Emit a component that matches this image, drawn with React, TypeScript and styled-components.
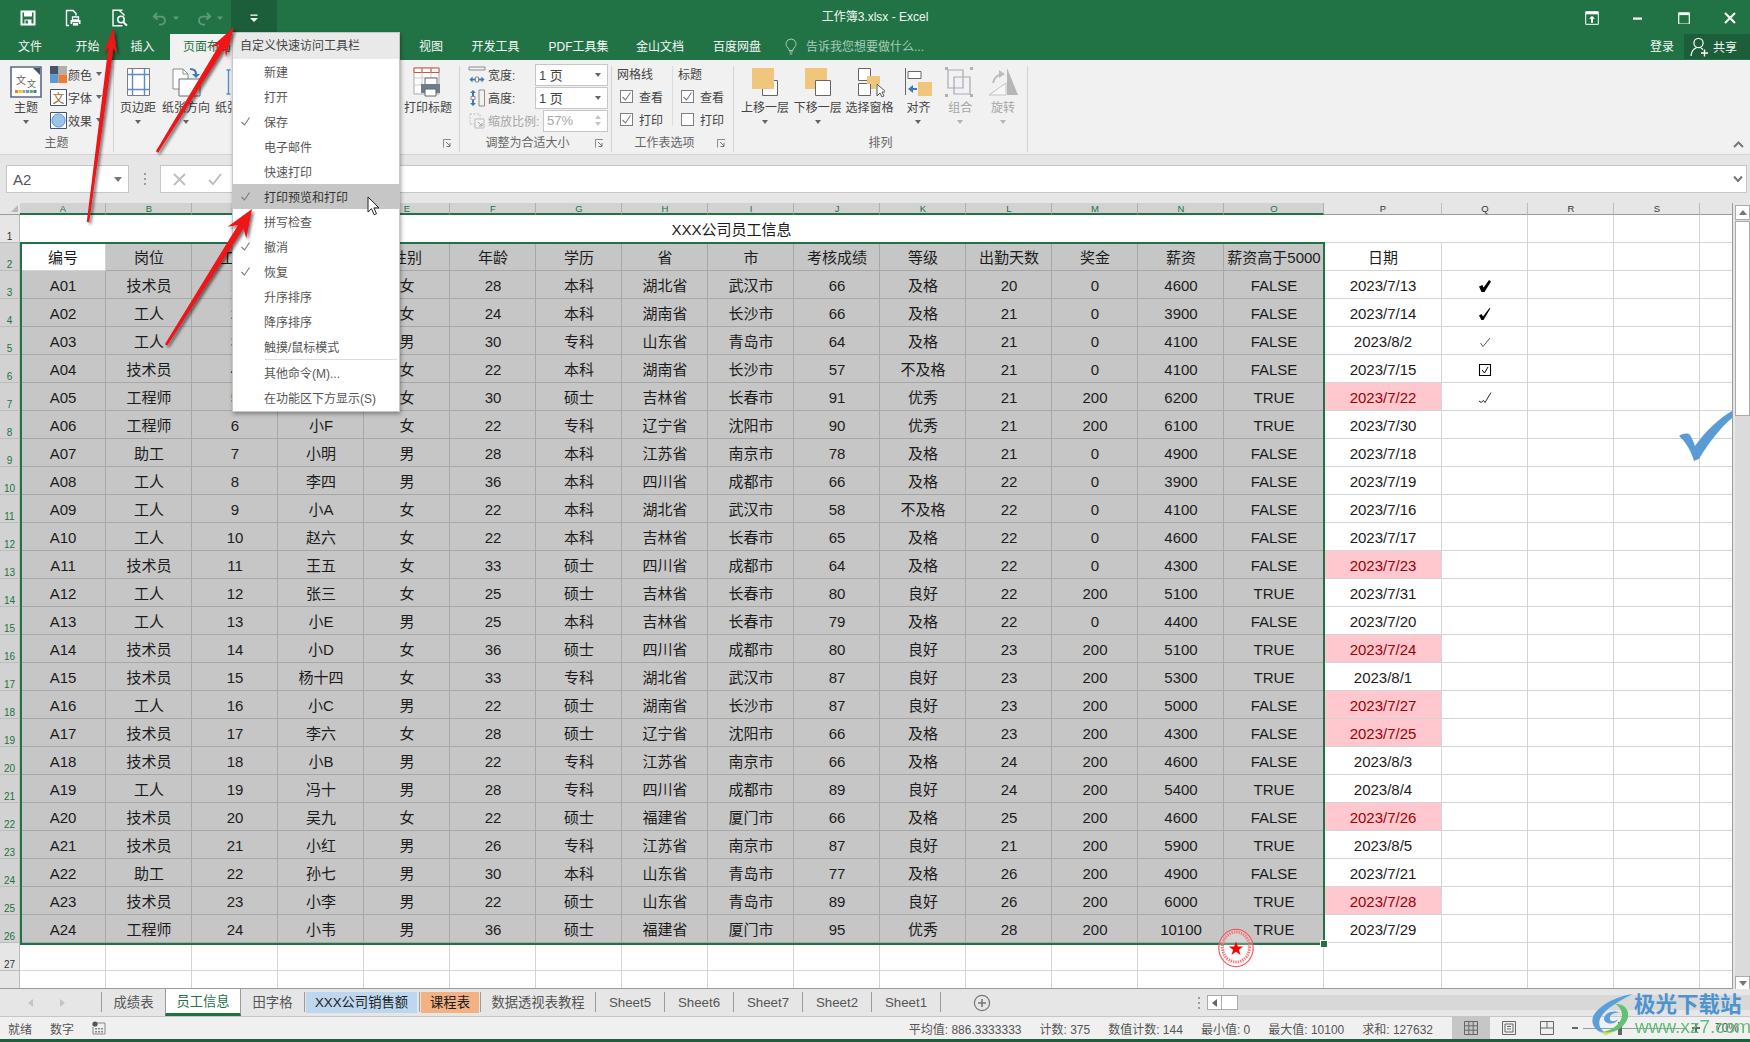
import React from "react";
import styled, { createGlobalStyle } from "styled-components";

const GREEN = "#217346";
const FONT = `"Liberation Sans","Noto Sans CJK SC",sans-serif`;

const Global = createGlobalStyle`
  html, body { margin: 0; padding: 0; overflow: hidden; background: #e6e6e6; }
  * { box-sizing: border-box; }
  body { font-family: ${FONT}; }
`;

const Page = styled.div`
  position: relative;
  width: 1750px;
  height: 1042px;
  display: flex;
  flex-direction: column;
  overflow: hidden;
  font-size: 12px;
  color: #444;
`;

/* ---------- title bar ---------- */
const TitleBar = styled.header`
  height: 34px;
  background: ${GREEN};
  display: grid;
  grid-template-columns: 1fr auto 1fr;
  align-items: stretch;
  color: #fff;
`;
const Qat = styled.div`
  display: flex;
  padding-left: 5px;
`;
const QatButton = styled.div<{ $w?: number; $on?: boolean }>`
  width: ${(p) => p.$w ?? 46}px;
  display: flex;
  align-items: center;
  justify-content: center;
  gap: 5px;
  background: ${(p) => (p.$on ? "#1c5d3a" : "transparent")};
`;
const WinTitle = styled.div`
  font-size: 12px;
  line-height: 35px;
  color: #f3f8f5;
`;
const WinControls = styled.div`
  display: flex;
  justify-content: flex-end;
  gap: 6px;
`;
const WinButton = styled.div`
  width: 40px;
  display: flex;
  align-items: center;
  justify-content: center;
`;

/* ---------- tabs ---------- */
const TabRow = styled.nav`
  height: 26px;
  background: ${GREEN};
  display: flex;
  color: #f4f8f6;
`;
const RibbonTab = styled.div<{ $w: number; $on?: boolean }>`
  width: ${(p) => p.$w}px;
  text-align: center;
  line-height: 26px;
  font-size: 12px;
  color: ${(p) => (p.$on ? GREEN : "#f4f8f6")};
  background: ${(p) => (p.$on ? "#f1f1f1" : "transparent")};
`;
const TellMe = styled.div`
  display: flex;
  align-items: center;
  gap: 9px;
  color: #a8cbb8;
  font-size: 12px;
  padding-left: 3px;
  line-height: 24px;
  height: 25px;
`;
const Login = styled.div`
  margin-left: auto;
  line-height: 26px;
  margin-right: 10px;
`;
const Share = styled.div`
  width: 66px;
  height: 25px;
  background: #1c5d3a;
  display: flex;
  align-items: center;
  gap: 3px;
  padding-left: 6px;
`;

/* ---------- ribbon ---------- */
const Ribbon = styled.section`
  height: 95px;
  background: #f1f1f1;
  border-bottom: 1px solid #d2d2d2;
  display: flex;
  position: relative;
`;
const Group = styled.div<{ $w: number }>`
  width: ${(p) => p.$w}px;
  height: 86px;
  margin-top: 6px;
  border-right: 1px solid #d4d4d4;
  display: flex;
  flex-direction: column;
`;
const GroupBody = styled.div<{ $pl?: number; $mt?: number }>`
  flex: 1;
  display: flex;
  padding-left: ${(p) => p.$pl ?? 0}px;
  margin-top: ${(p) => p.$mt ?? 0}px;
`;
const GroupFoot = styled.div`
  height: 17px;
  display: flex;
  align-items: center;
  color: #666;
  font-size: 12px;
  line-height: 17px;
`;
const GroupName = styled.div`
  flex: 1;
  text-align: center;
`;
const Launcher = styled.div`
  width: 16px;
  display: flex;
  align-items: center;
  justify-content: flex-start;
`;
const LargeButton = styled.div<{ $w: number; $ml?: number; $off?: boolean }>`
  width: ${(p) => p.$w}px;
  margin-left: ${(p) => p.$ml ?? 0}px;
  display: flex;
  flex-direction: column;
  align-items: center;
  color: ${(p) => (p.$off ? "#a6a6a6" : "#444")};
  padding-top: 1px;
`;
const LargeIcon = styled.div`
  height: 30px;
  display: flex;
  align-items: center;
  justify-content: center;
`;
const LargeLabel = styled.div`
  line-height: 16px;
  margin-top: 3px;
  white-space: nowrap;
`;
const Caret = styled.div<{ $off?: boolean }>`
  width: 0;
  height: 0;
  margin-top: 4px;
  border-left: 3.5px solid transparent;
  border-right: 3.5px solid transparent;
  border-top: 4px solid ${(p) => (p.$off ? "#b5b5b5" : "#666")};
`;
const ThemeColumn = styled.div`
  display: flex;
  flex-direction: column;
  gap: 5px;
  margin: -1px 0 0 6px;
`;
const ThemeRow = styled.div`
  height: 18px;
  display: flex;
  align-items: center;
  gap: 1px;
`;
const SmallCaret = styled(Caret)`
  margin: 0 0 0 3px;
`;
const SelectCaret = styled(Caret)`
  margin: 0;
`;
const FitColumn = styled.div`
  flex: 1;
  display: flex;
  flex-direction: column;
  padding: 0 3px 0 8px;
`;
const FitRow = styled.div<{ $off?: boolean }>`
  height: 23px;
  display: flex;
  align-items: center;
  gap: 2px;
  color: ${(p) => (p.$off ? "#a6a6a6" : "#444")};
`;
const Select = styled.div<{ $w: number }>`
  margin-left: auto;
  width: ${(p) => p.$w}px;
  height: 22px;
  background: #fff;
  border: 1px solid #c6c6c6;
  display: flex;
  align-items: center;
  justify-content: space-between;
  padding: 0 6px 0 3px;
  font-size: 13px;
`;
const SpinMarks = styled.div`
  display: flex;
  flex-direction: column;
  gap: 3px;
`;
const UpMark = styled.div`
  width: 0;
  height: 0;
  border-left: 3px solid transparent;
  border-right: 3px solid transparent;
  border-bottom: 4px solid #c4c4c4;
`;
const DownMark = styled(UpMark)`
  border-bottom: 0;
  border-top: 4px solid #c4c4c4;
`;
const OptionColumn = styled.div<{ $w: number; $line?: boolean }>`
  width: ${(p) => p.$w}px;
  height: 60px;
  padding-left: 5px;
  border-right: ${(p) => (p.$line ? "1px solid #dcdcdc" : "0")};
`;
const OptionTitle = styled.div`
  line-height: 16px;
  margin: 1px 0 2px;
`;
const OptionRow = styled.div`
  height: 23px;
  display: flex;
  align-items: center;
  gap: 6px;
  padding-left: 3px;
`;
const CheckBox = styled.div`
  width: 13px;
  height: 13px;
  background: #fff;
  border: 1px solid #7f7f7f;
  display: flex;
  align-items: center;
  justify-content: center;
`;
const Collapse = styled.div`
  position: absolute;
  right: 6px;
  bottom: 6px;
`;

/* ---------- formula bar ---------- */
const FormulaBar = styled.section`
  height: 48px;
  background: #e6e6e6;
  display: flex;
  padding: 10px 3px 10px 6px;
`;
const NameBox = styled.div`
  width: 123px;
  background: #fff;
  border: 1px solid #c6c6c6;
  display: flex;
  align-items: center;
  justify-content: space-between;
  padding: 0 6px;
  font-size: 15px;
  color: #555;
`;
const NameCaret = styled.div`
  width: 0;
  height: 0;
  border-left: 4px solid transparent;
  border-right: 4px solid transparent;
  border-top: 5px solid #777;
`;
const Grip = styled.div`
  width: 31px;
  display: flex;
  flex-direction: column;
  align-items: center;
  justify-content: center;
  gap: 3px;
`;
const GripDot = styled.div`
  width: 2px;
  height: 2px;
  background: #9d9d9d;
`;
const FormulaInput = styled.div`
  flex: 1;
  background: #fff;
  border: 1px solid #c6c6c6;
  display: flex;
  align-items: center;
  gap: 22px;
  padding-left: 12px;
`;
const FormulaChevron = styled.div`
  margin-left: auto;
  margin-right: 3px;
`;

/* ---------- sheet ---------- */
const SheetArea = styled.section`
  height: 786px;
  display: flex;
  background: #e6e6e6;
`;
const COLS = [...Array(14).fill(86), 100, 118, 86, 86, 86, 33];
const SheetGrid = styled.div`
  width: 1733px;
  height: 786px;
  display: grid;
  grid-template-columns: 20px ${COLS.map((c) => c + "px").join(" ")};
  grid-template-rows: 12px repeat(27, 28px) 18px;
  overflow: hidden;
  background: #fff;
  border-right: 1px solid #9b9b9b;
  border-bottom: 1px solid #9b9b9b;
  position: relative;
`;
const Corner = styled.div`
  background: #e6e6e6;
  border-bottom: 1px solid #9b9b9b;
  position: relative;
  &::after {
    content: "";
    position: absolute;
    right: 2px;
    bottom: 2px;
    border-left: 7px solid transparent;
    border-bottom: 7px solid #b8b8b8;
  }
`;
const ColHead = styled.div<{ $sel?: boolean }>`
  background: ${(p) => (p.$sel ? "#d2d2d2" : "#e6e6e6")};
  color: ${(p) => (p.$sel ? "#217346" : "#333")};
  border-right: 1px solid ${(p) => (p.$sel ? "#b0b0b0" : "#bcbcbc")};
  border-bottom: ${(p) => (p.$sel ? "2px solid #217346" : "1px solid #9b9b9b")};
  font-size: 9.5px;
  line-height: 12px;
  text-align: center;
  padding-left: 1px;
`;
const RowHead = styled.div<{ $sel?: boolean }>`
  background: ${(p) => (p.$sel ? "#d2d2d2" : "#e6e6e6")};
  color: ${(p) => (p.$sel ? "#217346" : "#333")};
  border-right: 1px solid #bcbcbc;
  border-bottom: 1px solid #bcbcbc;
  font-size: 10px;
  line-height: 11px;
  display: flex;
  align-items: flex-end;
  justify-content: center;
`;
const Cell = styled.div<{ $kind?: "sel" | "active" | "plain" | "bad" }>`
  background: ${(p) =>
    p.$kind === "sel" ? "#c6c6c6" : p.$kind === "bad" ? "#ffc7ce" : "#fff"};
  color: ${(p) => (p.$kind === "bad" ? "#9c0006" : "#1c1c1c")};
  border-right: 1px solid ${(p) => (p.$kind === "sel" ? "#a7a7a7" : "#d4d4d4")};
  border-bottom: 1px solid ${(p) => (p.$kind === "sel" ? "#a7a7a7" : "#d4d4d4")};
  font-size: 15px;
  line-height: 27px;
  padding: 2px 0 0 1px;
  text-align: center;
  white-space: nowrap;
  display: flex;
  align-items: center;
  justify-content: center;
  overflow: hidden;
`;
const TitleCell = styled.div`
  grid-column: 2 / 18;
  background: #fff;
  border-bottom: 1px solid #d4d4d4;
  font-size: 15px;
  line-height: 29px;
  text-align: center;
  padding-left: 1px;
  color: #1c1c1c;
`;
const Selection = styled.div`
  position: absolute;
  grid-column: 2 / 17;
  grid-row: 3 / 28;
  inset: -1px -1px -2px 0;
  z-index: 2;
  border: 2px solid #217346;
  pointer-events: none;
`;
const FillHandle = styled.div`
  position: absolute;
  right: -5px;
  bottom: -5px;
  width: 6px;
  height: 6px;
  background: #217346;
  border: 1px solid #fff;
  box-sizing: content-box;
`;
const VScroll = styled.div`
  width: 15px;
  margin-left: 2px;
  height: 786px;
  background: #dbdbdb;
  margin-top: 2px;
  display: flex;
  flex-direction: column;
`;
const ScrollBtn = styled.div<{ $mt?: string }>`
  height: 15px;
  background: #fff;
  border: 1px solid #ababab;
  display: flex;
  align-items: center;
  justify-content: center;
  margin-top: ${(p) => p.$mt ?? "0"};
`;
const VThumb = styled.div`
  height: 195px;
  margin-top: 1px;
  background: #fff;
  border: 1px solid #ababab;
`;

/* ---------- sheet tabs ---------- */
const SheetTabs = styled.section`
  height: 28px;
  background: #e6e6e6;
  display: flex;
  align-items: stretch;
  border-bottom: 1px solid #c6c6c6;
`;
const TabNav = styled.div`
  width: 101px;
  display: flex;
  gap: 24px;
  align-items: center;
  padding-left: 27px;
`;
const TabSep = styled.div`
  width: 1px;
  margin: 3px 0 4px;
  background: #9b9b9b;
  flex: none;
`;
const SheetTab = styled.div<{ $w: number }>`
  width: ${(p) => p.$w}px;
  text-align: center;
  font-size: 13.3px;
  line-height: 27px;
  color: #555;
  white-space: nowrap;
`;
const ActiveTab = styled(SheetTab)`
  background: #fff;
  color: #217346;
  border: 1px solid #9b9b9b;
  border-top: 0;
  border-bottom: 3px solid #217346;
  margin-top: -1px;
  line-height: 28px;
`;
const ColorTab = styled(SheetTab)<{ $bg: string; $ml: number; $mr: number }>`
  background: ${(p) => p.$bg};
  color: #1c1c1c;
  margin: 3px ${(p) => p.$mr}px 3px ${(p) => p.$ml}px;
  line-height: 21px;
`;
const AddSheet = styled.div`
  margin-left: 29px;
  width: 24px;
  display: flex;
  align-items: center;
  justify-content: center;
`;
const HScrollWrap = styled.div`
  margin-left: auto;
  display: flex;
  align-items: center;
  width: 560px;
`;
const HDots = styled.div`
  width: 17px;
  display: flex;
  flex-direction: column;
  align-items: center;
  gap: 3px;
`;
const HTrack = styled.div`
  flex: 1;
  height: 15px;
  background: #d8d8d8;
  display: flex;
  align-items: stretch;
`;
const HBtn = styled.div`
  width: 15px;
  background: #fff;
  border: 1px solid #ababab;
  display: flex;
  align-items: center;
  justify-content: center;
`;
const HThumb = styled.div`
  width: 16px;
  background: #fff;
  border: 1px solid #ababab;
  border-left: 0;
`;

/* ---------- status ---------- */
const StatusBar = styled.footer`
  height: 22px;
  background: #f0f0f0;
  display: flex;
  align-items: stretch;
  font-size: 12px;
  color: #555;
`;
const StatusLeft = styled.div`
  display: flex;
  align-items: center;
  gap: 18px;
  padding-left: 8px;
`;
const StatusRight = styled.div`
  margin-left: auto;
  display: flex;
  align-items: center;
  gap: 18px;
  margin-right: 19px;
`;
const ViewBtn = styled.div<{ $on?: boolean }>`
  width: 38px;
  background: ${(p) => (p.$on ? "#c6c6c6" : "transparent")};
  display: flex;
  align-items: center;
  justify-content: center;
`;
const Zoomer = styled.div`
  width: 184px;
  display: flex;
  align-items: center;
  padding-left: 5px;
`;
const ZoomValue = styled.span`
  margin-left: 15px;
`;
const Slider = styled.div`
  position: relative;
  width: 104px;
  height: 1px;
  background: #9a9a9a;
  margin: 0 5px 0 4px;
`;
const SliderKnob = styled.div`
  position: absolute;
  left: 35px;
  top: -6px;
  width: 4px;
  height: 13px;
  background: #666;
`;
const Bottom = styled.div`
  height: 3px;
  background: #1b5f3f;
`;

/* ---------- menu ---------- */
const Menu = styled.div`
  position: absolute;
  left: 232px;
  top: 32px;
  width: 168px;
  height: 380px;
  background: #fff;
  border: 1px solid #c6c6c6;
  box-shadow: 1px 2px 4px rgba(0, 0, 0, 0.35);
  z-index: 5;
  font-size: 12px;
  color: #555;
`;
const MenuHead = styled.div`
  height: 26px;
  line-height: 27px;
  background: #e9e9e9;
  color: #444;
  padding-left: 7px;
`;
const MenuItem = styled.div<{ $on?: boolean }>`
  height: 25px;
  display: flex;
  align-items: center;
  background: ${(p) => (p.$on ? "#c6c6c6" : "transparent")};
  color: ${(p) => (p.$on ? "#333" : "#555")};
`;
const MenuTick = styled.div`
  width: 31px;
  padding-left: 7px;
  display: flex;
  align-items: center;
`;
const MenuRule = styled.div`
  height: 1px;
  background: #dcdcdc;
  margin: 0 2px 0 32px;
`;

/* ---------- overlays ---------- */
const Overlay = styled.svg`
  position: absolute;
  left: 0;
  top: 0;
  z-index: 6;
  pointer-events: none;
`;
const Mark = styled.svg<{ $x: number; $y: number; $z?: number }>`
  position: absolute;
  left: ${(p) => p.$x}px;
  top: ${(p) => p.$y}px;
  z-index: ${(p) => p.$z ?? 4};
  pointer-events: none;
`;
const WaterBrand = styled.div`
  position: absolute;
  left: 1634px;
  top: 990px;
  z-index: 7;
  font-size: 21.5px;
  font-weight: 700;
  line-height: 30px;
  color: #4c94d0;
  white-space: nowrap;
`;
const WaterUrl = styled.div`
  position: absolute;
  left: 1635px;
  top: 1016px;
  z-index: 7;
  font-size: 19px;
  line-height: 22px;
  color: #58b873;
  opacity: 0.92;
  white-space: nowrap;
`;
const IconSvg = styled.svg<{ $flip?: boolean }>`
  display: block;
  flex: none;
  transform: ${(p) => (p.$flip ? "scaleX(-1)" : "none")};
`;

/* ---------- icons ---------- */
const Svg: React.FC<{ s?: number; h?: number; flip?: boolean; children?: React.ReactNode }> = ({ s = 30, h, flip, children }) => (
  <IconSvg $flip={flip} width={s} height={h ?? s} viewBox={`0 0 ${s} ${h ?? s}`}>
    {children}
  </IconSvg>
);

const IconSave = () => (
  <Svg s={16}>
    <path d="M1.5 1.5h13v13h-13z" fill="none" stroke="#fff" strokeWidth="2" />
    <path d="M4 2h8v4.5H4zM4.5 9.5h7V14h-7z" fill="#fff" />
    <path d="M5.5 10.5h2.4v3H5.5z" fill={GREEN} />
  </Svg>
);
const IconPrintDoc = () => (
  <Svg s={18}>
    <path d="M4 16.5H1.5v-15h6.5l3 3v2" fill="none" stroke="#fff" strokeWidth="1.4" />
    <path d="M7.5 8h6v3h-6z" fill="none" stroke="#fff" strokeWidth="1.3" />
    <path d="M5.5 11h10v4h-10z" fill="#fff" />
    <path d="M7.5 13.5h6v3.5h-6z" fill="#fff" stroke={GREEN} strokeWidth=".8" />
  </Svg>
);
const IconPreview = () => (
  <Svg s={18}>
    <path d="M11.5 1.2H2v15.5h9.5" fill="none" stroke="#fff" strokeWidth="1.4" />
    <path d="M8 1.2l5 4.6v1" fill="none" stroke="#fff" strokeWidth="1.4" />
    <circle cx="10" cy="10.5" r="3.2" fill="none" stroke="#fff" strokeWidth="1.5" />
    <path d="M12.3 13l3.6 3.6" stroke="#fff" strokeWidth="2" />
  </Svg>
);
const IconUndo = ({ flip }: { flip?: boolean }) => (
  <Svg s={16} flip={flip}>
    <path d="M5 3L1.8 6.6 5.6 9.6M2.5 6.6h6.5a4 4 0 1 1 0 8H7" fill="none" stroke="#5d9a7b" strokeWidth="1.9" />
  </Svg>
);
const TinyDown = () => (
  <Svg s={6}>
    <path d="M0 1.5h6L3 5z" fill="#5d9a7b" />
  </Svg>
);
const IconCustom = () => (
  <Svg s={10}>
    <path d="M1.5 1.5h7v1.3h-7z" fill="#fff" />
    <path d="M1 5h8L5 9z" fill="#fff" />
  </Svg>
);
const IconDisplay = () => (
  <Svg s={14}>
    <path d="M.7.7h12.6v12.6H.7z" fill="none" stroke="#fff" />
    <path d="M1 1h12v2.3H1z" fill="#fff" />
    <path d="M7 4.8l3 3H8v4H6v-4H4z" fill="#fff" />
  </Svg>
);
const IconMin = () => (
  <Svg s={12}>
    <path d="M1 5.5h9v2.2H1z" fill="#fff" />
  </Svg>
);
const IconMax = () => (
  <Svg s={12}>
    <path d="M.7 1h10.6v11H.7z" fill="none" stroke="#fff" strokeWidth="1.2" />
    <path d="M.7 .5h10.6v2.6H.7z" fill="#fff" />
  </Svg>
);
const IconClose = () => (
  <Svg s={12}>
    <path d="M1 1l10 10M11 1L1 11" stroke="#fff" strokeWidth="2.1" />
  </Svg>
);
const IconBulb = () => (
  <Svg s={12} h={17}>
    <path d="M6 1a5 5 0 0 0-3 9c.8.7 1 1.5 1 2.5h4c0-1 .2-1.8 1-2.5a5 5 0 0 0-3-9z" fill="none" stroke="#a8cbb8" />
    <path d="M4.2 14h3.6M4.8 16h2.4" stroke="#a8cbb8" />
  </Svg>
);
const IconPerson = () => (
  <Svg s={20} h={22}>
    <circle cx="8.5" cy="7" r="4.6" fill="none" stroke="#fff" strokeWidth="1.2" />
    <path d="M1 20c.4-4.3 2.4-7 5.3-8.2M11 12l2 1.5" fill="none" stroke="#fff" strokeWidth="1.2" />
    <path d="M14.5 13.5v7M11 17h7" stroke="#fff" strokeWidth="1.4" />
  </Svg>
);

const IconTheme = () => (
  <Svg s={32}>
    <path d="M1 1h30v30H1z" fill="#fff" stroke="#596a7f" strokeWidth="1.6" />
    <path d="M23 2h7v7z" fill="#44546a" />
    <text x="6" y="18" fontSize="10" fill="#666" fontFamily={FONT}>文</text>
    <text x="17" y="21" fontSize="9" fill="#666" fontFamily={FONT}>文</text>
    {["#ed7d31", "#ffc000", "#a5a5a5", "#5b9bd5", "#70ad47", "#4472c4"].map((c, i) => (
      <rect key={c} x={5 + i * 3.7} y="24" width="3" height="3" fill={c} />
    ))}
  </Svg>
);
const IconColors = () => (
  <Svg s={17}>
    <path d="M0 0h8.5v8.5H0z" fill="#44546a" />
    <path d="M8.5 0H17v8.5H8.5z" fill="#b0b0b0" />
    <path d="M0 8.5h8.5V17H0z" fill="#5b9bd5" />
    <path d="M8.5 8.5H17V17H8.5z" fill="#ed7d31" />
  </Svg>
);
const IconFonts = () => (
  <Svg s={17}>
    <path d="M.5.5h16v16H.5z" fill="#fff" stroke="#44546a" />
    <text x="2.5" y="13.5" fontSize="12" fill="#9a6a2f" fontFamily={FONT}>文</text>
  </Svg>
);
const IconEffects = () => (
  <Svg s={17}>
    <path d="M.5.5h16v16H.5z" fill="#fff" stroke="#44546a" />
    <circle cx="8.5" cy="8.5" r="6.6" fill="#9dc3e6" stroke="#5b9bd5" />
  </Svg>
);
const IconMargins = () => (
  <Svg>
    <path d="M4.5 1.5h22v27h-22z" fill="#fff" stroke="#7d7d7d" />
    <path d="M9.5 2v26M21.5 2v26M5 7.5h21M5 22.5h21" stroke="#5b8cc7" strokeWidth="1.4" fill="none" />
  </Svg>
);
const IconOrient = () => (
  <Svg>
    <path d="M2 2h10l5 5v15H2z" fill="#fff" stroke="#8d8d8d" />
    <path d="M12 2v5h5" fill="none" stroke="#8d8d8d" />
    <path d="M8 12h21v17H8z" fill="#fff" stroke="#6d6d6d" />
    <path d="M19 2c4 0 6 2 6 5" fill="none" stroke="#3f7ab8" strokeWidth="2.2" />
    <path d="M21 7l4 4 4-4z" fill="#3f7ab8" />
  </Svg>
);
const IconSize = () => (
  <Svg>
    <path d="M4.5 3v24M2.5 3h4M2.5 27h4" stroke="#5b8cc7" strokeWidth="1.4" fill="none" />
    <path d="M10 2h16v26H10z" fill="#fff" stroke="#8d8d8d" />
  </Svg>
);
const IconArea = () => (
  <Svg>
    <path d="M5 2h20v26H5z" fill="#fff" stroke="#8d8d8d" />
  </Svg>
);
const IconPrintTitle = () => (
  <Svg s={32}>
    <path d="M2 2h25v26H2z" fill="#fff" stroke="#a8a8a8" />
    <path d="M2 2h25v4.5H2z" fill="#fff" stroke="#c8553d" />
    <path d="M10 2v26M19 2v26M2 12h25M2 19h25" stroke="#c9c9c9" fill="none" />
    <path d="M10 2v5M19 2v5" stroke="#c8553d" />
    <path d="M13 12h12v7H13z" fill="#fff" stroke="#666" />
    <path d="M9 18h19v9H9z" fill="#6b7d8e" />
    <path d="M13 23h11v7H13z" fill="#fff" stroke="#666" />
  </Svg>
);
const IconWide = () => (
  <Svg s={18}>
    <path d="M1 1h16M1 4h16M1 1v3M17 1v3" stroke="#8d8d8d" fill="none" />
    <path d="M1.5 13.5l3-3v2h3v2h-3v2zM16.5 13.5l-3-3v2h-3v2h3v2z" fill="#3f7ab8" />
    <path d="M7.5 11h3v5h-3z" fill="none" stroke="#8d8d8d" />
  </Svg>
);
const IconTall = () => (
  <Svg s={18}>
    <path d="M11 1h5.5v16H11z" fill="none" stroke="#8d8d8d" />
    <path d="M5 1l3 3H6v3H4V4H2zM5 17l-3-3h2v-3h2v3h2z" fill="#3f7ab8" />
    <path d="M3 7.5h4v3H3z" fill="none" stroke="#8d8d8d" />
  </Svg>
);
const IconScale = () => (
  <Svg s={18}>
    <path d="M2 2h10v10H2z" fill="none" stroke="#bdbdbd" strokeDasharray="2 1.5" />
    <path d="M7 7h9v9H7z" fill="#f4f4f4" stroke="#bdbdbd" />
    <path d="M10 10l4 4M14 11v3h-3" fill="none" stroke="#9d9d9d" />
  </Svg>
);
const Launch = () => (
  <Svg s={9}>
    <path d="M.5 4V.5H8M.5.5V8.5M8.5 .5" fill="none" stroke="#8d8d8d" />
    <path d="M3 3l4 4M7 4v3.5H3.5" fill="none" stroke="#777" />
  </Svg>
);
const Tick = () => (
  <Svg s={11}>
    <path d="M1.5 6l3 3 5-7.5" fill="none" stroke="#7a7a7a" strokeWidth="1.1" />
  </Svg>
);
const YELLOW = "#efc67b";
const IconUp = () => (
  <Svg>
    <path d="M12.5 13.5h15v15h-15z" fill="#fff" stroke="#666" />
    <path d="M2 1h22v21H2z" fill={YELLOW} />
  </Svg>
);
const IconDown = () => (
  <Svg>
    <path d="M2 1h22v21H2z" fill={YELLOW} />
    <path d="M12.5 13.5h15v15h-15z" fill="#fff" stroke="#666" />
  </Svg>
);
const IconPane = () => (
  <Svg>
    <path d="M3.5 1.5h12v12h-12zM3.5 16.5h12v12h-12z" fill="#fff" stroke="#666" />
    <path d="M12 9h13v8h-4v5h-5v-5h-4z" fill={YELLOW} />
    <path d="M22 17v12l3-3 2 4 2-1-2-4h4z" fill="#fff" stroke="#555" />
  </Svg>
);
const IconAlign = () => (
  <Svg>
    <path d="M2.5 1v27" stroke="#666" />
    <path d="M5 4.5h13v7H5z" fill="#fff" stroke="#666" />
    <path d="M15 15h14v14H15z" fill={YELLOW} />
    <path d="M5 22l5-4v3h4v2h-4v3z" fill="#3f7ab8" />
  </Svg>
);
const IconGroupObj = () => (
  <Svg>
    <path d="M3 3h15v18H3zM9 10h16v17H9z" fill="#f3f1f6" stroke="#a9a9a9" strokeWidth="1.2" />
    <path d="M0 0h3v3H0zM25 0h3v3h-3zM0 27h3v3H0zM25 27h3v3h-3z" fill="#b0b0b0" />
  </Svg>
);
const IconRotate = () => (
  <Svg>
    <path d="M1 28l17-12v12z" fill="#f7f7f7" stroke="#c4c4c4" />
    <path d="M19 1l11 27H19z" fill="#b6b6b6" />
    <path d="M5 16c1-5 4-8 9-9" fill="none" stroke="#bdbdbd" strokeWidth="2" />
    <path d="M11 3l6 4-6 4z" fill="#bdbdbd" />
  </Svg>
);
const ChevUp = () => (
  <Svg s={11} h={8}>
    <path d="M1 7l4.5-4.5L10 7" fill="none" stroke="#777" strokeWidth="2" />
  </Svg>
);
const ChevDown = () => (
  <Svg s={10} h={8}>
    <path d="M1 1.5L5 6l4-4.5" fill="none" stroke="#777" strokeWidth="2" />
  </Svg>
);
const FxX = () => (
  <Svg s={13}>
    <path d="M1 1l11 11M12 1L1 12" stroke="#bdbdbd" strokeWidth="1.8" />
  </Svg>
);
const FxOk = () => (
  <Svg s={14}>
    <path d="M1 8l4 4 8-10" fill="none" stroke="#bdbdbd" strokeWidth="1.9" />
  </Svg>
);
const Tri = ({ dir, c = "#777" }: { dir: "up" | "down" | "left" | "right"; c?: string }) => {
  const d = { up: "M0 6h8L4 1z", down: "M0 1h8L4 6z", left: "M6 0v8L1 4z", right: "M1 0v8l5-4z" }[dir];
  return (
    <Svg s={8}>
      <path d={d} fill={c} />
    </Svg>
  );
};
const IconPlus = () => (
  <Svg s={18}>
    <circle cx="9" cy="9" r="7.6" fill="none" stroke="#777" strokeWidth="1.2" />
    <path d="M9 5v8M5 9h8" stroke="#777" strokeWidth="1.6" />
  </Svg>
);
const IconMacro = () => (
  <Svg s={14}>
    <path d="M4 2h9v11H1V6" fill="none" stroke="#888" />
    <circle cx="3" cy="3" r="2.6" fill="#555" />
    <path d="M3 7h2v1.5H3zM6 7h2v1.5H6zM9 7h2v1.5H9zM3 10h2v1.5H3zM6 10h2v1.5H6zM9 10h2v1.5H9z" fill="#888" />
  </Svg>
);
const ViewNormal = () => (
  <Svg s={14}>
    <path d="M.5.5h13v13H.5zM.5 4.8h13M.5 9.2h13M4.8.5v13M9.2.5v13" fill="none" stroke="#666" />
  </Svg>
);
const ViewLayout = () => (
  <Svg s={14}>
    <path d="M.5.5h13v13H.5z" fill="none" stroke="#666" />
    <path d="M3 3h8v8H3zM5 5.5h4M5 8h4" fill="none" stroke="#666" />
  </Svg>
);
const ViewBreak = () => (
  <Svg s={14}>
    <path d="M.5.5h13v13H.5zM7 .5V7H.5M7 7h6.5" fill="none" stroke="#666" />
  </Svg>
);
const Minus = () => (
  <Svg s={8}>
    <path d="M1 3h6v2H1z" fill="#666" />
  </Svg>
);
const Plus = () => (
  <Svg s={8}>
    <path d="M0 3h8v2H0zM3 0h2v8H3z" fill="#666" />
  </Svg>
);

/* Q column ticks */
const QTick = ({ v }: { v: number }) => {
  if (v === 0)
    return (
      <Svg s={14}>
        <path d="M1 7.5l3.4-1.5 1.2 2.5L11 1l2 1.5L6.5 13H3.5z" fill="#000" />
      </Svg>
    );
  if (v === 1)
    return (
      <Svg s={14}>
        <path d="M1 8.5l2.5-1.5 1.5 2.5L11.5 1l.8.6-6.8 11.5H3.5z" fill="#000" />
      </Svg>
    );
  if (v === 2)
    return (
      <Svg s={14}>
        <path d="M2.5 8l2.5 3.5L12 3" fill="none" stroke="#555" strokeWidth="1" />
      </Svg>
    );
  if (v === 3)
    return (
      <Svg s={14}>
        <path d="M1.5 1.5h11v11h-11z" fill="none" stroke="#000" strokeWidth="1.1" />
        <path d="M4 7l2.5 3 3.5-6" fill="none" stroke="#000" strokeWidth="1" />
      </Svg>
    );
  return (
    <Svg s={14}>
      <path d="M1 10l2 1.5 2.5-2 1.5 2 6-10" fill="none" stroke="#111" strokeWidth=".9" />
    </Svg>
  );
};

const arrow = (x1: number, y1: number, x2: number, y2: number, hw: number, hl: number, tw: number, sw: number) => {
  const L = Math.hypot(x2 - x1, y2 - y1);
  const ux = (x2 - x1) / L;
  const uy = (y2 - y1) / L;
  const nx = -uy;
  const ny = ux;
  const bx = x2 - ux * hl;
  const by = y2 - uy * hl;
  const nbx = x2 - ux * hl * 0.75;
  const nby = y2 - uy * hl * 0.75;
  const p = (a: number, b: number) => `${a.toFixed(1)},${b.toFixed(1)}`;
  return [
    p(x1 + nx * tw, y1 + ny * tw),
    p(nbx + nx * sw, nby + ny * sw),
    p(bx + nx * hw, by + ny * hw),
    p(x2, y2),
    p(bx - nx * hw, by - ny * hw),
    p(nbx - nx * sw, nby - ny * sw),
    p(x1 - nx * tw, y1 - ny * tw),
  ].join(" ");
};

/* ---------- data ---------- */
const LETTERS = "ABCDEFGHIJKLMNOPQRS".split("");
const HEAD = "编号 岗位 工号 姓名 性别 年龄 学历 省 市 考核成绩 等级 出勤天数 奖金 薪资 薪资高于5000".split(" ");
const ROWS = `A01 技术员 1 小G 女 28 本科 湖北省 武汉市 66 及格 20 0 4600 FALSE
A02 工人 2 小H 女 24 本科 湖南省 长沙市 66 及格 21 0 3900 FALSE
A03 工人 3 小I 男 30 专科 山东省 青岛市 64 及格 21 0 4100 FALSE
A04 技术员 4 小J 女 22 本科 湖南省 长沙市 57 不及格 21 0 4100 FALSE
A05 工程师 5 小K 女 30 硕士 吉林省 长春市 91 优秀 21 200 6200 TRUE
A06 工程师 6 小F 女 22 专科 辽宁省 沈阳市 90 优秀 21 200 6100 TRUE
A07 助工 7 小明 男 28 本科 江苏省 南京市 78 及格 21 0 4900 FALSE
A08 工人 8 李四 男 36 本科 四川省 成都市 66 及格 22 0 3900 FALSE
A09 工人 9 小A 女 22 本科 湖北省 武汉市 58 不及格 22 0 4100 FALSE
A10 工人 10 赵六 女 22 本科 吉林省 长春市 65 及格 22 0 4600 FALSE
A11 技术员 11 王五 女 33 硕士 四川省 成都市 64 及格 22 0 4300 FALSE
A12 工人 12 张三 女 25 硕士 吉林省 长春市 80 良好 22 200 5100 TRUE
A13 工人 13 小E 男 25 本科 吉林省 长春市 79 及格 22 0 4400 FALSE
A14 技术员 14 小D 女 36 硕士 四川省 成都市 80 良好 23 200 5100 TRUE
A15 技术员 15 杨十四 女 33 专科 湖北省 武汉市 87 良好 23 200 5300 TRUE
A16 工人 16 小C 男 22 硕士 湖南省 长沙市 87 良好 23 200 5000 FALSE
A17 技术员 17 李六 女 28 硕士 辽宁省 沈阳市 66 及格 23 200 4300 FALSE
A18 技术员 18 小B 男 22 专科 江苏省 南京市 66 及格 24 200 4600 FALSE
A19 工人 19 冯十 男 28 专科 四川省 成都市 89 良好 24 200 5400 TRUE
A20 技术员 20 吴九 女 22 硕士 福建省 厦门市 66 及格 25 200 4600 FALSE
A21 技术员 21 小红 男 26 专科 江苏省 南京市 87 良好 21 200 5900 TRUE
A22 助工 22 孙七 男 30 本科 山东省 青岛市 77 及格 26 200 4900 FALSE
A23 技术员 23 小李 男 22 硕士 山东省 青岛市 89 良好 26 200 6000 TRUE
A24 工程师 24 小韦 男 36 硕士 福建省 厦门市 95 优秀 28 200 10100 TRUE`
  .split("\n")
  .map((l) => l.split(" "));
const DATES = "7/13 7/14 8/2 7/15 7/22! 7/30 7/18 7/19 7/16 7/17 7/23! 7/31 7/20 7/24! 8/1 7/27! 7/25! 8/3 8/4 7/26! 8/5 7/21 7/28! 7/29".split(" ");

const MENU: [string, boolean, boolean?][] = [
  ["新建", false],
  ["打开", false],
  ["保存", true],
  ["电子邮件", false],
  ["快速打印", false],
  ["打印预览和打印", true, true],
  ["拼写检查", false],
  ["撤消", true],
  ["恢复", true],
  ["升序排序", false],
  ["降序排序", false],
  ["触摸/鼠标模式", false],
];

const LargeBtn = ({ w, ml, off, label, icon, caret = true }: { w: number; ml?: number; off?: boolean; label: string; icon: React.ReactNode; caret?: boolean }) => (
  <LargeButton $w={w} $ml={ml} $off={off}>
    <LargeIcon>{icon}</LargeIcon>
    <LargeLabel>{label}</LargeLabel>
    {caret && <Caret $off={off} />}
  </LargeButton>
);

const Sheet = () => {
  const cells: React.ReactNode[] = [];
  cells.push(<Corner key="corner" />);
  LETTERS.forEach((l, i) => cells.push(<ColHead key={l} $sel={i < 15}>{l}</ColHead>));
  cells.push(<ColHead key="end" />);
  for (let r = 1; r <= 28; r++) {
    cells.push(
      <RowHead key={"rh" + r} $sel={r >= 2 && r <= 26}>
        {r <= 27 ? r : ""}
      </RowHead>
    );
    if (r === 1) {
      cells.push(<TitleCell key="title">XXX公司员工信息</TitleCell>);
    } else if (r >= 2 && r <= 26) {
      const row = r === 2 ? HEAD : ROWS[r - 3];
      row.forEach((v, i) =>
        cells.push(
          <Cell key={r + "-" + i} $kind={r === 2 && i === 0 ? "active" : "sel"}>
            {v}
          </Cell>
        )
      );
    } else {
      for (let c = 0; c < 15; c++) cells.push(<Cell key={r + "-" + c} />);
    }
    if (r >= 2 && r <= 26) {
      const d = r === 2 ? "日期" : DATES[r - 3];
      const bad = d.endsWith("!");
      cells.push(
        <Cell key={"p" + r} $kind={bad ? "bad" : "plain"}>
          {r === 2 ? d : "2023/" + d.replace("!", "")}
        </Cell>
      );
    } else if (r > 26) {
      cells.push(<Cell key={"p" + r} />);
    }
    const tickRow = r >= 3 && r <= 7;
    cells.push(<Cell key={"q" + r}>{tickRow && <QTick v={r - 3} />}</Cell>);
    cells.push(<Cell key={"r" + r} />, <Cell key={"s" + r} />, <Cell key={"t" + r} />);
  }
  return (
    <SheetGrid>
      {cells}
      <Selection>
        <FillHandle />
      </Selection>
    </SheetGrid>
  );
};

const OTHER_TABS = ["Sheet5", "Sheet6", "Sheet7", "Sheet2", "Sheet1"];

export default function App() {
  return (
    <Page>
      <Global />
      <TitleBar>
        <Qat>
          <QatButton><IconSave /></QatButton>
          <QatButton><IconPrintDoc /></QatButton>
          <QatButton><IconPreview /></QatButton>
          <QatButton $w={44}><IconUndo /><TinyDown /></QatButton>
          <QatButton $w={44}><IconUndo flip /><TinyDown /></QatButton>
          <QatButton $on><IconCustom /></QatButton>
        </Qat>
        <WinTitle>工作簿3.xlsx - Excel</WinTitle>
        <WinControls>
          <WinButton><IconDisplay /></WinButton>
          <WinButton><IconMin /></WinButton>
          <WinButton><IconMax /></WinButton>
          <WinButton><IconClose /></WinButton>
        </WinControls>
      </TitleBar>

      <TabRow>
        <RibbonTab $w={60}>文件</RibbonTab>
        <RibbonTab $w={55}>开始</RibbonTab>
        <RibbonTab $w={55}>插入</RibbonTab>
        <RibbonTab $w={74} $on>页面布局</RibbonTab>
        <RibbonTab $w={52}>公式</RibbonTab>
        <RibbonTab $w={52}>数据</RibbonTab>
        <RibbonTab $w={52}>审阅</RibbonTab>
        <RibbonTab $w={62}>视图</RibbonTab>
        <RibbonTab $w={67}>开发工具</RibbonTab>
        <RibbonTab $w={99}>PDF工具集</RibbonTab>
        <RibbonTab $w={64}>金山文档</RibbonTab>
        <RibbonTab $w={90}>百度网盘</RibbonTab>
        <TellMe><IconBulb />告诉我您想要做什么...</TellMe>
        <Login>登录</Login>
        <Share><IconPerson />共享</Share>
      </TabRow>

      <Ribbon>
        <Group $w={114}>
          <GroupBody $pl={8}>
            <LargeBtn w={36} label="主题" icon={<IconTheme />} />
            <ThemeColumn>
              <ThemeRow><IconColors />颜色<SmallCaret /></ThemeRow>
              <ThemeRow><IconFonts />字体<SmallCaret /></ThemeRow>
              <ThemeRow><IconEffects />效果<SmallCaret /></ThemeRow>
            </ThemeColumn>
          </GroupBody>
          <GroupFoot><GroupName>主题</GroupName></GroupFoot>
        </Group>
        <Group $w={346}>
          <GroupBody>
            <LargeBtn w={48} label="页边距" icon={<IconMargins />} />
            <LargeBtn w={48} label="纸张方向" icon={<IconOrient />} />
            <LargeBtn w={50} ml={4} label="纸张大小" icon={<IconSize />} />
            <LargeBtn w={45} label="打印区域" icon={<IconArea />} />
            <LargeBtn w={45} label="分隔符" icon={<IconArea />} />
            <LargeBtn w={45} label="背景" icon={<IconArea />} caret={false} />
            <LargeBtn w={48} ml={5} label="打印标题" icon={<IconPrintTitle />} caret={false} />
          </GroupBody>
          <GroupFoot>
            <GroupName>页面设置</GroupName>
            <Launcher><Launch /></Launcher>
          </GroupFoot>
        </Group>
        <Group $w={152}>
          <GroupBody $mt={-3}>
            <FitColumn>
              <FitRow><IconWide />宽度:<Select $w={73}>1 页<SelectCaret /></Select></FitRow>
              <FitRow><IconTall />高度:<Select $w={73}>1 页<SelectCaret /></Select></FitRow>
              <FitRow $off><IconScale />缩放比例:<Select $w={65}>57%<SpinMarks><UpMark /><DownMark /></SpinMarks></Select></FitRow>
            </FitColumn>
          </GroupBody>
          <GroupFoot>
            <GroupName>调整为合适大小</GroupName>
            <Launcher><Launch /></Launcher>
          </GroupFoot>
        </Group>
        <Group $w={122}>
          <GroupBody>
            <OptionColumn $w={61} $line>
              <OptionTitle>网格线</OptionTitle>
              <OptionRow><CheckBox><Tick /></CheckBox>查看</OptionRow>
              <OptionRow><CheckBox><Tick /></CheckBox>打印</OptionRow>
            </OptionColumn>
            <OptionColumn $w={60}>
              <OptionTitle>标题</OptionTitle>
              <OptionRow><CheckBox><Tick /></CheckBox>查看</OptionRow>
              <OptionRow><CheckBox />打印</OptionRow>
            </OptionColumn>
          </GroupBody>
          <GroupFoot>
            <GroupName>工作表选项</GroupName>
            <Launcher><Launch /></Launcher>
          </GroupFoot>
        </Group>
        <Group $w={294}>
          <GroupBody $pl={4}>
            <LargeBtn w={54} label="上移一层" icon={<IconUp />} />
            <LargeBtn w={52} label="下移一层" icon={<IconDown />} />
            <LargeBtn w={52} label="选择窗格" icon={<IconPane />} caret={false} />
            <LargeBtn w={46} label="对齐" icon={<IconAlign />} />
            <LargeBtn w={38} off label="组合" icon={<IconGroupObj />} />
            <LargeBtn w={48} off label="旋转" icon={<IconRotate />} />
          </GroupBody>
          <GroupFoot><GroupName>排列</GroupName></GroupFoot>
        </Group>
        <Collapse><ChevUp /></Collapse>
      </Ribbon>

      <FormulaBar>
        <NameBox>A2<NameCaret /></NameBox>
        <Grip><GripDot /><GripDot /><GripDot /></Grip>
        <FormulaInput>
          <FxX />
          <FxOk />
          <FormulaChevron><ChevDown /></FormulaChevron>
        </FormulaInput>
      </FormulaBar>

      <SheetArea>
        <Sheet />
        <VScroll>
          <ScrollBtn><Tri dir="up" /></ScrollBtn>
          <VThumb />
          <ScrollBtn $mt="auto"><Tri dir="down" /></ScrollBtn>
        </VScroll>
      </SheetArea>

      <SheetTabs>
        <TabNav>
          <Tri dir="left" c="#c4c4c4" />
          <Tri dir="right" c="#c4c4c4" />
        </TabNav>
        <TabSep />
        <SheetTab $w={63}>成绩表</SheetTab>
        <ActiveTab $w={76}>员工信息</ActiveTab>
        <SheetTab $w={63}>田字格</SheetTab>
        <TabSep />
        <ColorTab $w={111} $bg="#bdd7ee" $ml={1} $mr={2}>XXX公司销售额</ColorTab>
        <TabSep />
        <ColorTab $w={58} $bg="#f4b183" $ml={1} $mr={1}>课程表</ColorTab>
        <TabSep />
        <SheetTab $w={114}>数据透视表教程</SheetTab>
        <TabSep />
        {OTHER_TABS.map((t) => (
          <React.Fragment key={t}>
            <SheetTab $w={68}>{t}</SheetTab>
            <TabSep />
          </React.Fragment>
        ))}
        <AddSheet><IconPlus /></AddSheet>
        <HScrollWrap>
          <HDots><GripDot /><GripDot /><GripDot /></HDots>
          <HTrack>
            <HBtn><Tri dir="left" c="#666" /></HBtn>
            <HThumb />
          </HTrack>
        </HScrollWrap>
      </SheetTabs>

      <StatusBar>
        <StatusLeft>
          <span>就绪</span>
          <span>数字</span>
          <IconMacro />
        </StatusLeft>
        <StatusRight>
          <span>平均值: 886.3333333</span>
          <span>计数: 375</span>
          <span>数值计数: 144</span>
          <span>最小值: 0</span>
          <span>最大值: 10100</span>
          <span>求和: 127632</span>
        </StatusRight>
        <ViewBtn $on><ViewNormal /></ViewBtn>
        <ViewBtn><ViewLayout /></ViewBtn>
        <ViewBtn><ViewBreak /></ViewBtn>
        <Zoomer>
          <Minus />
          <Slider><SliderKnob /></Slider>
          <Plus />
          <ZoomValue>70%</ZoomValue>
        </Zoomer>
      </StatusBar>
      <Bottom />

      {/* overlays */}
      <Menu>
        <MenuHead>自定义快速访问工具栏</MenuHead>
        {MENU.map(([t, ticked, on]) => (
          <MenuItem key={t} $on={on}>
            <MenuTick>{ticked && <Tick />}</MenuTick>
            {t}
          </MenuItem>
        ))}
        <MenuRule />
        <MenuItem><MenuTick />其他命令(M)...</MenuItem>
        <MenuItem><MenuTick />在功能区下方显示(S)</MenuItem>
      </Menu>

      <Mark $x={367} $y={196} $z={7} width="14" height="20" viewBox="0 0 14 20">
        <path d="M1 1v15l3.5-3.3 2.6 6 2.4-1-2.6-5.8H12z" fill="#fff" stroke="#222" strokeWidth="1" />
      </Mark>

      <Mark $x={1218} $y={928} $z={4} width="36" height="40" viewBox="0 0 36 40">
        <ellipse cx="18" cy="20" rx="17.2" ry="18.6" fill="#fff" fillOpacity=".25" stroke="#f25a5a" strokeWidth="1.2" />
        <ellipse cx="18" cy="19" rx="13.6" ry="15" fill="none" stroke="#f47a7a" strokeWidth="3" strokeDasharray="1.4 1" />
        <path d="M18 13.5l1.9 5h5.3l-4.3 3.2 1.6 5.3-4.5-3.2-4.5 3.2 1.6-5.3-4.3-3.2h5.3z" fill="#f00" />
      </Mark>

      <Mark $x={1678} $y={410} $z={3} width="55" height="52" viewBox="0 0 55 52">
        <path d="M1 26c5-3 9-3 11-1 2 3 3 6 5 11C27 22 41 8 54 1v7C42 18 30 34 21 49l-5 2C13 41 8 32 1 26z" fill="#5b9bd5" />
      </Mark>

      <Overlay width="1750" height="1042" viewBox="0 0 1750 1042">
        <defs>
          <filter id="arrowShadow" x="-30%" y="-10%" width="160%" height="120%">
            <feDropShadow dx="2" dy="2" stdDeviation="1.5" floodColor="#000" floodOpacity=".55" />
          </filter>
        </defs>
        <g fill="#ee1216" filter="url(#arrowShadow)">
          <polygon points={arrow(88, 222, 113.5, 28, 7, 26, 1.2, 2.6)} />
          <polygon points={arrow(157, 152, 234, 27, 9, 30, 1.3, 3)} />
          <polygon points={arrow(166, 345, 252, 209, 11, 28, 1.3, 3.2)} />
        </g>
      </Overlay>

      <Mark $x={1592} $y={993} $z={7} width="42" height="43" viewBox="0 0 42 43">
        <path d="M41 1C26 3 6 12 1 24c-3 9 5 16 15 18C8 37 5 31 9 24 14 15 29 7 41 1z" fill="#5b9fd8" />
        <path d="M12 26c0-6 10-10 16-6-6-1-11 2-10 6 0 3 5 3 8 0-2 6-13 6-14 0z" fill="#5b9fd8" />
        <path d="M23 11c10-1 17 8 11 18-5 8-15 13-24 10 10-1 20-9 20-17 0-5-3-9-7-11z" fill="#63c174" />
        <path d="M8 38c4 2 9 2 14 0-4 4-11 5-14 0z" fill="#e7e24c" />
      </Mark>
      <WaterBrand>极光下载站</WaterBrand>
      <WaterUrl>www.xz7.com</WaterUrl>
    </Page>
  );
}
